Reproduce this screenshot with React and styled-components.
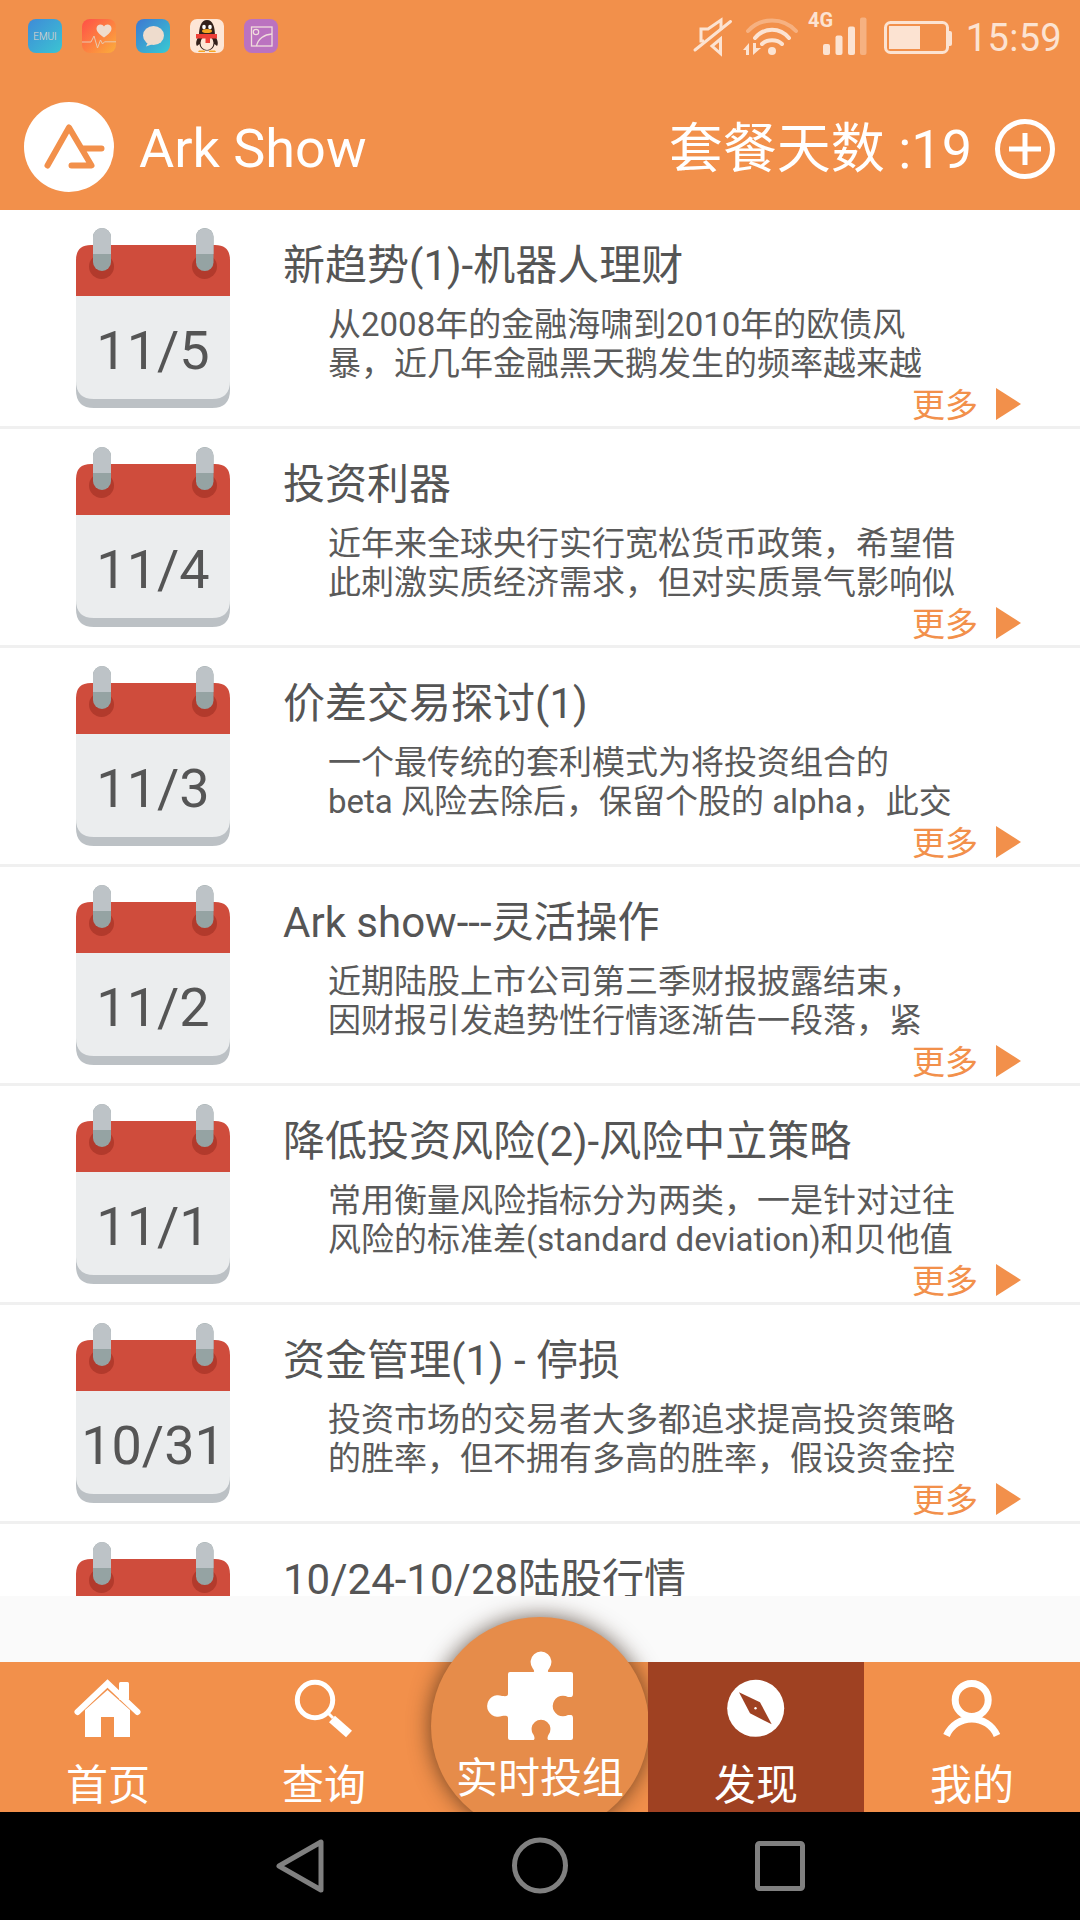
import React from 'react';
import styled, { createGlobalStyle } from 'styled-components';

const ORANGE = '#f2904b';
const PALE = '#fce3d2';

const GlobalStyle = createGlobalStyle`
    html, body {
        margin: 0;
        padding: 0;
        background: #fafafa;
    }
    * {
        box-sizing: border-box;
    }
`;

const Page = styled.div`
    width: 1080px;
    height: 1920px;
    display: flex;
    flex-direction: column;
    overflow: hidden;
    background: #fafafa;
    font-family: Roboto, 'Noto Sans CJK SC', sans-serif;
`;
const Header = styled.header`
    height: 210px;
    flex: none;
    background: ${ORANGE};
`;
const StatusBar = styled.div`
    height: 72px;
    display: flex;
    align-items: center;
    padding: 0 18px 0 28px;
`;
const AppIcons = styled.div`
    display: flex;
    gap: 20px;
`;
const AppIcon = styled.svg`
    width: 34px;
    height: 34px;
    display: block;
`;
const StatusIcons = styled.div`
    margin-left: auto;
    display: flex;
    align-items: flex-start;
    height: 72px;
    color: ${PALE};
`;
const StatusIcon = styled.svg`
    display: block;
    flex: none;
    overflow: visible;
    margin-top: ${(p) => p.$top}px;
    margin-right: ${(p) => p.$right || 0}px;
`;
const Clock = styled.span`
    margin-top: 2px;
    font-size: 38px;
    line-height: 72px;
    letter-spacing: 0.3px;
    color: ${PALE};
`;
const AppBar = styled.div`
    height: 138px;
    display: flex;
    align-items: center;
    padding: 12px 24px 0 24px;
`;
const LogoMark = styled.svg`
    width: 90px;
    height: 90px;
    flex: none;
`;
const AppTitle = styled.h1`
    margin: 4px 0 0 25px;
    font-size: 54px;
    font-weight: 400;
    line-height: 66px;
    color: #fff;
`;
const DaysLabel = styled.span`
    margin: 5px 0 0 auto;
    font-size: 54px;
    line-height: 66px;
    color: #fff;
`;
const AddIcon = styled.svg`
    width: 62px;
    height: 62px;
    flex: none;
    margin: 3px 0 0 22px;
`;

const List = styled.main`
    height: 1386px;
    flex: none;
    overflow: hidden;
    background: #fff;
`;
const Row = styled.article`
    height: 219px;
    display: flex;
    padding: 18px 59px 0 76px;
    border-bottom: 3px solid #f0f0f0;
`;
const Calendar = styled.div`
    position: relative;
    width: 154px;
    height: 180px;
    flex: none;
`;
const CalendarArt = styled.svg`
    width: 154px;
    height: 180px;
    display: block;
`;
const CalendarDate = styled.span`
    position: absolute;
    left: 0;
    right: 0;
    top: 90px;
    font-size: 54px;
    line-height: 66px;
    text-align: center;
    color: #555;
`;
const RowBody = styled.div`
    flex: 1;
    min-width: 0;
    margin-left: 53px;
    padding-top: 13px;
`;
const RowTitle = styled.h2`
    margin: 0;
    font-size: 42px;
    font-weight: 400;
    line-height: 50px;
    white-space: nowrap;
    color: #555;
`;
const Summary = styled.p`
    margin: 14px 0 0;
    padding-left: 45px;
    font-size: 33px;
    line-height: 39px;
    color: #5a5a5a;
`;
const SummaryLine = styled.span`
    display: block;
    white-space: nowrap;
`;
const MoreLink = styled.div`
    display: flex;
    align-items: center;
    justify-content: flex-end;
    gap: 18px;
    margin-top: 3px;
    font-size: 33px;
    line-height: 40px;
    color: ${ORANGE};
`;
const MoreArrow = styled.i`
    width: 0;
    height: 0;
    margin-top: -5px;
    border-left: 25px solid ${ORANGE};
    border-top: 16px solid transparent;
    border-bottom: 16px solid transparent;
`;

const Spacer = styled.div`
    flex: 1;
`;
const TabBar = styled.nav`
    height: 150px;
    flex: none;
    display: grid;
    grid-template-columns: repeat(5, 216px);
    background: ${ORANGE};
`;
const Tab = styled.div`
    position: relative;
    display: flex;
    flex-direction: column;
    align-items: center;
    padding-top: 16px;
    background: ${(p) => (p.$active ? '#9f4122' : 'transparent')};
`;
const TabIcon = styled.svg`
    width: 76px;
    height: 62px;
    display: block;
    flex: none;
`;
const TabLabel = styled.span`
    margin-top: 21px;
    font-size: 42px;
    line-height: 50px;
    color: #fff;
`;
const CenterButton = styled.div`
    position: absolute;
    left: -1px;
    top: -45px;
    width: 218px;
    height: 218px;
    display: flex;
    flex-direction: column;
    align-items: center;
    padding-top: 23px;
    border-radius: 50%;
    background: #e68c4a;
    box-shadow: 0 0 22px rgba(50, 30, 15, 0.7);
`;
const PuzzleIcon = styled.svg`
    width: 120px;
    height: 110px;
    flex: none;
    margin-right: 20px;
`;
const CenterLabel = styled.span`
    margin-top: 4px;
    font-size: 42px;
    line-height: 50px;
    color: #fff;
`;
const NavBar = styled.div`
    position: relative;
    z-index: 2;
    height: 108px;
    flex: none;
    background: #000;
`;
const NavArt = styled.svg`
    position: absolute;
    top: 0;
    left: 0;
    width: 1080px;
    height: 108px;
`;

const articles = [
    { date: '11/5', title: '新趋势(1)-机器人理财', lines: ['从2008年的金融海啸到2010年的欧债风', '暴，近几年金融黑天鹅发生的频率越来越'] },
    { date: '11/4', title: '投资利器', lines: ['近年来全球央行实行宽松货币政策，希望借', '此刺激实质经济需求，但对实质景气影响似'] },
    { date: '11/3', title: '价差交易探讨(1)', lines: ['一个最传统的套利模式为将投资组合的', 'beta 风险去除后，保留个股的 alpha，此交'] },
    { date: '11/2', title: 'Ark show---灵活操作', lines: ['近期陆股上市公司第三季财报披露结束，', '因财报引发趋势性行情逐渐告一段落，紧'] },
    { date: '11/1', title: '降低投资风险(2)-风险中立策略', lines: ['常用衡量风险指标分为两类，一是针对过往', '风险的标准差(standard deviation)和贝他值'] },
    { date: '10/31', title: '资金管理(1) - 停损', lines: ['投资市场的交易者大多都追求提高投资策略', '的胜率，但不拥有多高的胜率，假设资金控'] },
    { date: '', title: '10/24-10/28陆股行情', lines: [] },
];

const EmuiIcon = () => (
    <AppIcon viewBox="0 0 34 34">
        <defs>
            <linearGradient id="emui" x1="0" y1="0" x2="1" y2="1">
                <stop offset="0" stopColor="#3f8bd8" />
                <stop offset="1" stopColor="#3bc4d2" />
            </linearGradient>
        </defs>
        <rect width="34" height="34" rx="8" fill="url(#emui)" />
        <text x="17" y="21" fontSize="10" textAnchor="middle" fill="#e8d8cc" fontFamily="Roboto" fontWeight="300">EMUI</text>
    </AppIcon>
);

const HealthIcon = () => (
    <AppIcon viewBox="0 0 34 34">
        <defs>
            <linearGradient id="health" x1="0" y1="0" x2="1" y2="1">
                <stop offset="0" stopColor="#ff4f47" />
                <stop offset="1" stopColor="#fbae3c" />
            </linearGradient>
        </defs>
        <rect width="34" height="34" rx="8" fill="url(#health)" />
        <path d="M22 18.5C17 15 14.5 12.5 14.5 9.5C14.5 7 16.5 5.5 18.5 5.5C20 5.5 21.3 6.3 22 7.5C22.7 6.3 24 5.5 25.5 5.5C27.5 5.5 29.5 7 29.5 9.5C29.5 12.5 27 15 22 18.5Z" fill="#efdccd" />
        <path d="M0 23H9L12 17L15.5 29L18.5 21L20.5 25L22.5 22.8H34" fill="none" stroke="#e9c9ae" strokeWidth="1" />
    </AppIcon>
);

const MessageIcon = () => (
    <AppIcon viewBox="0 0 34 34">
        <defs>
            <linearGradient id="message" x1="0" y1="0" x2="1" y2="1">
                <stop offset="0" stopColor="#3e78d2" />
                <stop offset="1" stopColor="#38cbd2" />
            </linearGradient>
        </defs>
        <rect width="34" height="34" rx="8" fill="url(#message)" />
        <ellipse cx="17.5" cy="16.5" rx="10.5" ry="9.5" fill="#eedccd" />
        <path d="M12 23L10 27.5L17 25Z" fill="#eedccd" />
    </AppIcon>
);

const QQIcon = () => (
    <AppIcon viewBox="0 0 34 34">
        <rect width="34" height="34" rx="7" fill="#fde6d6" />
        <path d="M9 17C9 8 11 1 17 1C23 1 25 8 25 17C28 21 28.5 25 27 27L24.5 25C24 29 21 31.5 17 31.5C13 31.5 10 29 9.5 25L7 27C5.5 25 6 21 9 17Z" fill="#33211b" />
        <ellipse cx="17" cy="24" rx="6.5" ry="7" fill="#fde6d6" />
        <ellipse cx="14" cy="8" rx="1.8" ry="2.3" fill="#fff" />
        <ellipse cx="20" cy="8" rx="1.8" ry="2.3" fill="#fff" />
        <ellipse cx="17" cy="12" rx="5" ry="2" fill="#f5a623" />
        <path d="M6 15H27V19.5H20V24H15.5V19.5H6Z" fill="#ee3f36" />
        <path d="M9 31.5H15V33H8ZM19 31.5H25L26 33H19Z" fill="#f5a623" />
    </AppIcon>
);

const GalleryIcon = () => (
    <AppIcon viewBox="0 0 34 34">
        <rect width="34" height="34" rx="8" fill="#bb72c0" />
        <rect x="7.5" y="8" width="20.5" height="19" fill="none" stroke="#f0dcdc" strokeWidth="1.3" />
        <circle cx="12" cy="13" r="2.7" fill="none" stroke="#f0dcdc" strokeWidth="1.2" />
        <path d="M12.5 27C14 20 20 15.5 28 15" fill="none" stroke="#f0dcdc" strokeWidth="1.3" />
    </AppIcon>
);

const MuteIcon = () => (
    <StatusIcon $top={17} $right={9} width="40" height="40" viewBox="0 0 40 40" fill="none" stroke={PALE} strokeWidth="3">
        <path d="M28 13V3L15 12H8V24H11" />
        <path d="M27.5 22L19 29L27.5 36.5V22Z" />
        <path d="M2 33L37.5 4.5" strokeLinecap="round" />
    </StatusIcon>
);

const WifiIcon = () => (
    <StatusIcon $top={18} $right={10} width="56" height="38" viewBox="0 0 56 38" fill="none" stroke={PALE} strokeWidth="4" strokeLinecap="round">
        <path d="M6 13C19 -1 41 -1 54 13" opacity="0.4" />
        <path d="M13 20C22 9 38 9 47 20" />
        <path d="M20 26C25 21 35 21 40 26" />
        <circle cx="30" cy="33" r="4" fill={PALE} stroke="none" />
        <path d="M1 32L7 25V37H4V32ZM11 25H14V30H19L11 37Z" fill={PALE} stroke="none" />
    </StatusIcon>
);

const SignalIcon = () => (
    <StatusIcon $top={12} $right={8} width="68" height="44" viewBox="0 0 68 44" fill={PALE}>
        <text x="0" y="15" fontSize="20" fontWeight="700" fontFamily="Roboto">4G</text>
        <rect x="15" y="32" width="7" height="11" rx="2" />
        <rect x="27.5" y="23.5" width="7" height="19.5" rx="2" />
        <rect x="40" y="14.5" width="7" height="28.5" rx="2" />
        <rect x="52" y="5.5" width="6.5" height="37.5" rx="2" opacity="0.4" />
    </StatusIcon>
);

const BatteryIcon = () => (
    <StatusIcon $top={21} $right={14} width="68" height="33" viewBox="0 0 68 33" fill={PALE}>
        <rect x="1.5" y="1.5" width="62" height="30" rx="5" fill="none" stroke={PALE} strokeWidth="3" />
        <rect x="5" y="5" width="31" height="23" />
        <path d="M64 10H66Q68 10 68 12V23Q68 25 66 25H64Z" />
    </StatusIcon>
);

const CalendarGraphic = () => (
    <CalendarArt viewBox="0 0 154 180">
        <path d="M0 100H154V162Q154 180 136 180H18Q0 180 0 162Z" fill="#bcc1c5" />
        <path d="M0 68H154V153Q154 171 136 171H18Q0 171 0 153Z" fill="#ebedee" />
        <path d="M0 68V32Q0 17 15 17H139Q154 17 154 32V68Z" fill="#cf4c3c" />
        <circle cx="25.5" cy="38.5" r="12.5" fill="#b23a2c" />
        <circle cx="128.5" cy="38.5" r="12.5" fill="#b23a2c" />
        <rect x="17" y="0" width="18" height="43" rx="9" fill="#95a3a3" />
        <rect x="120" y="0" width="17.5" height="43" rx="8.75" fill="#95a3a3" />
        <path d="M17 26V9A9 9 0 0 1 35 9V26Z" fill="#bdc3c7" />
        <path d="M120 26V9A8.75 8.75 0 0 1 137.5 9V26Z" fill="#bdc3c7" />
    </CalendarArt>
);

const App = () => {
    return (
        <Page>
            <GlobalStyle />
            <Header>
                <StatusBar>
                    <AppIcons>
                        <EmuiIcon />
                        <HealthIcon />
                        <MessageIcon />
                        <QQIcon />
                        <GalleryIcon />
                    </AppIcons>
                    <StatusIcons>
                        <MuteIcon />
                        <WifiIcon />
                        <SignalIcon />
                        <BatteryIcon />
                        <Clock>15:59</Clock>
                    </StatusIcons>
                </StatusBar>
                <AppBar>
                    <LogoMark viewBox="0 0 90 90">
                        <circle cx="45" cy="45" r="45" fill="#fff" />
                        <path d="M23.5 63.5L45 25.5L67.5 63.5H47.5M59.5 46.5H77.5" fill="none" stroke={ORANGE} strokeWidth="6" strokeLinecap="round" strokeLinejoin="round" />
                    </LogoMark>
                    <AppTitle>Ark Show</AppTitle>
                    <DaysLabel>套餐天数 :19</DaysLabel>
                    <AddIcon viewBox="0 0 62 62" fill="none" stroke="#fff" strokeWidth="5">
                        <circle cx="31" cy="31" r="27.5" />
                        <path d="M15 31H47M31 15V47" />
                    </AddIcon>
                </AppBar>
            </Header>
            <List>
                {articles.map((item) => (
                    <Row key={item.title}>
                        <Calendar>
                            <CalendarGraphic />
                            {item.date && <CalendarDate>{item.date}</CalendarDate>}
                        </Calendar>
                        <RowBody>
                            <RowTitle>{item.title}</RowTitle>
                            {item.lines.length > 0 && (
                                <>
                                    <Summary>
                                        {item.lines.map((line) => (
                                            <SummaryLine key={line}>{line}</SummaryLine>
                                        ))}
                                    </Summary>
                                    <MoreLink>
                                        更多
                                        <MoreArrow />
                                    </MoreLink>
                                </>
                            )}
                        </RowBody>
                    </Row>
                ))}
            </List>
            <Spacer />
            <TabBar>
                <Tab>
                    <TabIcon viewBox="0 0 76 62" fill="#fff">
                        <rect x="49" y="4" width="10" height="18" rx="1.5" />
                        <path d="M15 59V32L37.5 12L60 32V59H44V39H31V59Z" />
                        <path d="M7.5 34L37.5 5.5L67.5 34" fill="none" stroke="#fff" strokeWidth="6" strokeLinecap="round" />
                    </TabIcon>
                    <TabLabel>首页</TabLabel>
                </Tab>
                <Tab>
                    <TabIcon viewBox="0 0 76 62" fill="none" stroke="#fff">
                        <circle cx="29" cy="22" r="17.7" strokeWidth="5" />
                        <path d="M41 34L47 40" strokeWidth="3" />
                        <path d="M46 41L63 56" strokeWidth="9" />
                    </TabIcon>
                    <TabLabel>查询</TabLabel>
                </Tab>
                <Tab>
                    <CenterButton>
                        <PuzzleIcon viewBox="0 0 120 110">
                            <path
                                d="M40 32H63C65 32 64 30 62.5 28A10.4 10.4 0 1 1 79.5 28C78 30 77 32 79 32H101Q103 32 103 34V54C103 58 100 57 98 57A10.3 10.3 0 1 0 98 75C100 75 103 74 103 78V98Q103 100 101 100H79C77 100 77 97 79 94A9.4 9.4 0 1 0 63 94C65 97 65 100 63 100H40Q38 100 38 98V78C38 75 34 76 32 76A10.8 10.8 0 1 1 32 56C34 56 38 57 38 54V34Q38 32 40 32Z"
                                fill="#fff"
                            />
                        </PuzzleIcon>
                        <CenterLabel>实时投组</CenterLabel>
                    </CenterButton>
                </Tab>
                <Tab $active>
                    <TabIcon viewBox="0 0 76 62">
                        <circle cx="37.7" cy="30.3" r="28.5" fill="#fff" />
                        <path d="M21 14.3L42 24.3L53.7 46.3L32 35.3Z" fill="#9f4122" />
                        <circle cx="37.5" cy="30.3" r="1.2" fill="#fff" />
                    </TabIcon>
                    <TabLabel>发现</TabLabel>
                </Tab>
                <Tab>
                    <TabIcon viewBox="0 0 76 62" fill="none" stroke="#fff" strokeWidth="7">
                        <circle cx="37.7" cy="22" r="16.5" />
                        <path d="M12.5 57.5A27.5 27.5 0 0 1 63 57.5" />
                    </TabIcon>
                    <TabLabel>我的</TabLabel>
                </Tab>
            </TabBar>
            <NavBar>
                <NavArt viewBox="0 0 1080 108" fill="none" stroke="#808080" strokeWidth="5" strokeLinejoin="round">
                    <path d="M279 54L321 30V78Z" />
                    <circle cx="540" cy="53.5" r="25.5" />
                    <rect x="757.5" y="31.5" width="45" height="45" rx="2" />
                </NavArt>
            </NavBar>
        </Page>
    );
};

export default App;
